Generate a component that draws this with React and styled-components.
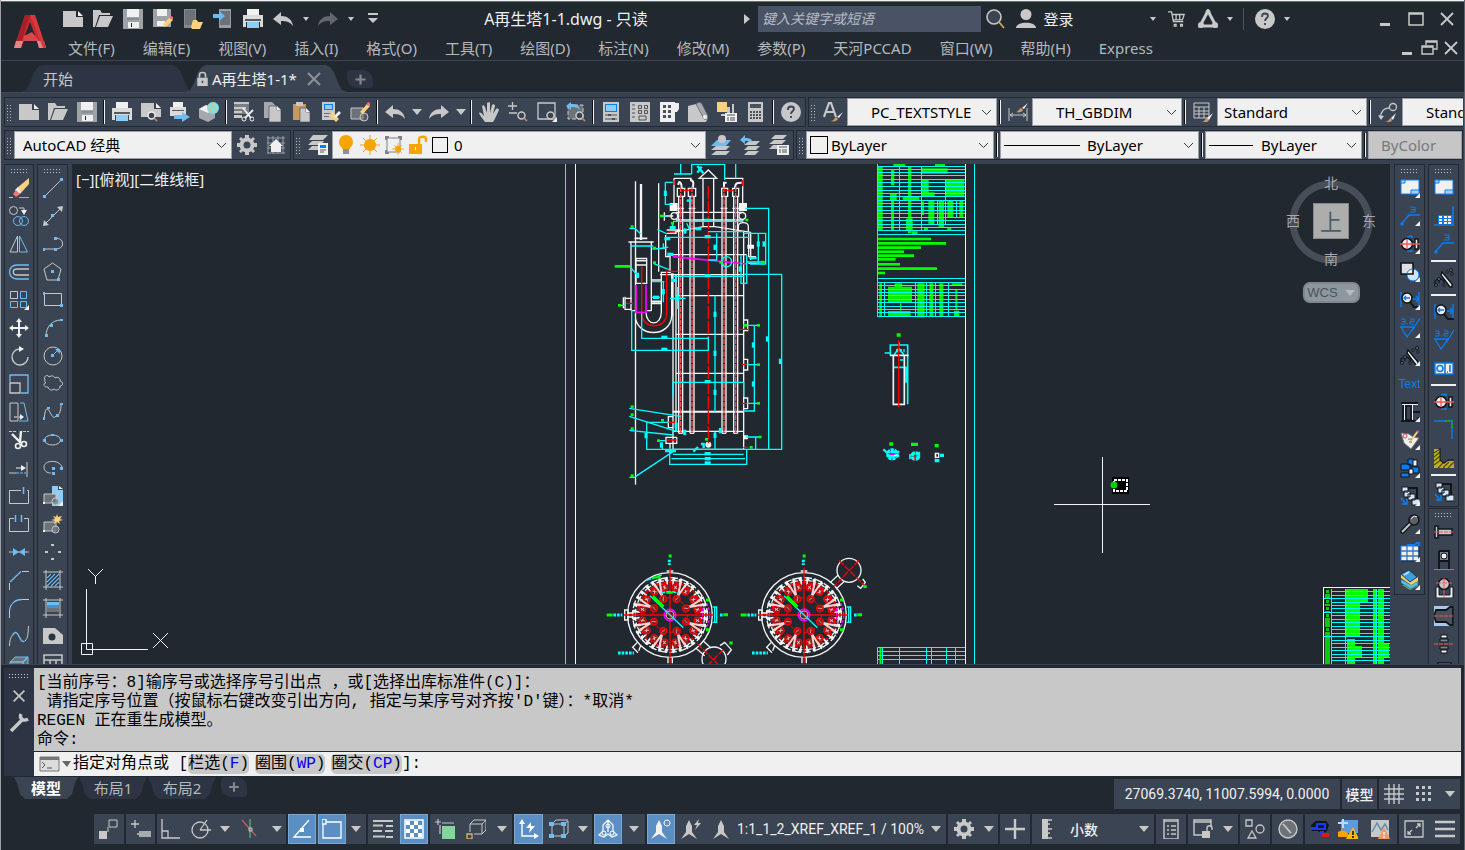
import { useState } from 'react';
import styled, { createGlobalStyle, css } from 'styled-components';

const GlobalStyle = createGlobalStyle`
  * {
    box-sizing: border-box;
  }

  body {
    margin: 0;
    overflow: hidden;
    background: #212830;
    font-family: 'Noto Sans', 'Noto Sans CJK SC', sans-serif;
    font-size: 15px;
  }

  button,
  input,
  select {
    font: inherit;
    color: inherit;
    margin: 0;
  }

  svg {
    display: block;
    flex: none;
  }
`;

const G = '#c8c8c8';
const W = '#f0f0f0';
const B = '#6ebcf5';
const L = '#8ecdf6';
const Y = '#fbd07f';
const O = '#f7a400';
const D = '#6d7278';
const P = '#0a7cf0';
const K = '#10151c';

const magnifier = (
  <>
    <circle cx="13.5" cy="13.5" r="3.5" fill="#3b4453" stroke={G} strokeWidth="1.5" />
    <path d="M16 16l3 3" stroke="#c98b6b" strokeWidth="1.6" />
  </>
);

const blockShape = (
  <>
    <path d="M1 8h12v9H1z" fill={D} stroke={G} />
    <path d="M0 16h2v2H0z" fill={W} />
    <circle cx="12.5" cy="15.5" r="3.5" fill={D} fillOpacity=".6" stroke={G} />
  </>
);

const leaderNumber = (
  <>
    <path d="M2 17L9 9h11" fill="none" stroke={P} strokeWidth="1.4" />
    <circle cx="2" cy="18" r="1.8" fill={P} />
    <path d="M10 1h5v5h-5M11 3.5h4" fill="none" stroke={P} />
  </>
);

const surface = (
  <>
    <path d="M0 9h14L7 19 1 9M12 13L20 0" fill="none" stroke={P} strokeWidth="1.3" />
    <path d="M1 1h4v5H1M2 3.5h3M7 6h1M10 1h4v2.5h-4v2.5h4" fill="none" stroke={P} />
  </>
);

const boltCircle = (
  <>
    <path d="M12 2v2M12 16v2M7 3l5-1M7 17h5" stroke={P} strokeWidth="1.6" />
    <circle cx="7" cy="10" r="5.5" fill={W} stroke={K} strokeWidth="1.6" />
    <path d="M15 5h3v10h-3z" fill={W} stroke={K} strokeWidth="1.4" />
    <path d="M0 10h20M7 5v10" stroke="#f25555" strokeWidth="1.3" />
  </>
);

const drill = (
  <>
    <path d="M8 4l10 12v3h-2L7 7z" fill={W} stroke={K} strokeWidth="1.4" />
    <path d="M1 17v-4l4-3 5 3v5M5 12v3" fill="none" stroke={K} strokeWidth="1.3" />
    <circle cx="17" cy="2" r="1.5" fill={D} stroke={K} />
    <circle cx="13" cy="4" r="1.3" fill={D} stroke={K} />
    <circle cx="18" cy="6" r="1.3" fill={D} stroke={K} />
    <circle cx="5" cy="11" r="1.5" fill={D} stroke={K} />
    <circle cx="2" cy="17" r="1.5" fill={D} stroke={K} />
    <circle cx="10" cy="17" r="1.3" fill={D} stroke={K} />
  </>
);

const dimZoom = (
  <>
    <path d="M1 2v15M19 2v15M3 9h16M16 6l3 3-3 3" fill="none" stroke={P} strokeWidth="1.4" />
    <circle cx="7" cy="8" r="5" fill={W} stroke={K} strokeWidth="1.6" />
    <path d="M4 8h6M6 6L4 8l2 2" fill="none" stroke={P} strokeWidth="1.4" />
    <path d="M10 12l4 5h6" fill="none" stroke={K} strokeWidth="2" />
  </>
);

const explode = (
  <>
    <path d="M6 1h12v15h-2V3H6z" fill={K} />
    <path d="M2 1h6v5H2zM4 5h6v6H4zM8 8h7v6H8zM12 13h8v6h-8z" fill="#d5e6f6" stroke={K} />
    <path d="M1 12l5 6M2 18h5v-5" fill="none" stroke={P} strokeWidth="1.6" />
  </>
);

const sheet = (
  <>
    <path d="M1 2h18v14H1z" fill={W} stroke={P} />
    <path d="M1 2h4v3H1zM11 12h8v4h-8z" fill="#a9d2fb" stroke={P} />
  </>
);

const hatchFrame = <path d="M3 0v20M17 0v20M0 2h20M0 17h20" stroke={G} fill="none" />;

const glyphs = {
  new: (
    <>
      <path d="M0 2h13v6h7v10H0z" fill={G} />
      <path d="M15 2l5 5h-5z" fill={W} />
    </>
  ),
  open: (
    <>
      <path d="M0 18V1h7l2 3h8v2H6L2 18z" fill={G} />
      <path d="M7 7h13l-5 11H3z" fill={G} />
    </>
  ),
  save: (
    <>
      <path d="M0 0h20v20H0z" fill="#9fa3a8" />
      <path d="M4 0h12v8H4zM5 13h11v6H5z" fill={W} />
      <path d="M8 14h1v4H8z" fill="#212830" />
      <path d="M4 9h12v2H4z" fill="#8a8e94" />
    </>
  ),
  saveas: (
    <>
      <path d="M0 0h18v18H0z" fill="#9fa3a8" />
      <path d="M4 0h10v7H4zM4 12h8v5H4z" fill={W} />
      <path d="M10 18l1-4 6-6 3 3-6 6z" fill={Y} />
      <path d="M16 9l2-2 2 1v3z" fill="#f26f6f" />
    </>
  ),
  mobile: (
    <>
      <path d="M1 0h12v19H1z" fill="#85898f" />
      <path d="M2 1h10v15H2z" fill={D} />
      <path d="M8 18l2-7h4l1 2h5l-3 7H9z" fill={Y} />
    </>
  ),
  upload: (
    <>
      <path d="M6 0h12v19H6z" fill="#9a9ea4" />
      <path d="M7 2h10v14H7z" fill={D} />
      <path d="M0 5h6V2l6 5-6 5V9H0z" fill={B} />
    </>
  ),
  print: (
    <>
      <path d="M4 0h12v6H4z" fill={W} />
      <path d="M0 6h20v12h-3v-5H3v5H0z" fill="#dcdcdc" />
      <path d="M2 10h16v2H2z" fill="#555b64" />
      <path d="M4 13h12v6H4z" fill={L} />
    </>
  ),
  undo: <path d="M0 10l8-7v4c6 0 11 3 12 10-3-4-6-5-12-5v4z" fill={G} />,
  redo: <path d="M20 10l-8-7v4C6 7 1 10 0 17c3-4 6-5 12-5v4z" fill={G} />,
  redoDim: <path d="M20 10l-8-7v4C6 7 1 10 0 17c3-4 6-5 12-5v4z" fill="#62676d" />,
  customize: <path d="M5 4h10v2H5zM5 9h10l-5 5z" fill={G} />,
  preview: (
    <>
      <path d="M0 1h13v6h7v8H0z" fill={G} />
      <path d="M15 1l5 5h-5z" fill={W} />
      <circle cx="10.5" cy="13.5" r="3.5" fill="#3b4453" stroke={W} strokeWidth="1.4" />
      <path d="M13 16l3 3" stroke="#c98b6b" strokeWidth="1.6" />
    </>
  ),
  publish: (
    <>
      <path d="M3 0h10v5H3z" fill={W} />
      <path d="M0 5h16v9H0z" fill="#dcdcdc" />
      <path d="M2 8h12v1H2z" fill="#555b64" />
      <path d="M4 13h8v-3l8 5-8 5v-3H4z" fill={B} />
    </>
  ),
  cube: (
    <>
      <path d="M0 7l7-4 9 4v9l-7 4-9-4z" fill="#a5a9ae" />
      <path d="M0 7l7-4 9 4-7 4z" fill={W} />
      <circle cx="14" cy="6" r="6" fill="#7fe0ea" />
      <path d="M9 3c3 0 7 2 9 7M12 11c-2-4 0-8 4-11" fill="none" stroke="#e3bf72" />
    </>
  ),
  cut: (
    <>
      <path d="M0 0h15v2H0zM0 5h12v2H0zM0 9h8v2H0zM0 13h8v3H0z" fill={G} />
      <path d="M15 0v12H0V0z" fill={G} fillOpacity=".45" />
      <path d="M9 6l8 10M19 8l-8 8" stroke={W} strokeWidth="1.8" />
      <circle cx="10" cy="17" r="2" fill="none" stroke={W} />
      <circle cx="18" cy="17" r="2" fill="none" stroke={W} />
    </>
  ),
  copy: (
    <>
      <path d="M1 0h8l4 4v12H1z" fill="#a5a9ae" />
      <path d="M6 4h8v4h4v12H6z" fill={G} stroke="#3b4453" strokeWidth=".6" />
      <path d="M14 4l4 4h-4z" fill={W} />
    </>
  ),
  paste: (
    <>
      <path d="M1 2h13v16H1z" fill="#c9975a" />
      <path d="M4 0h7v4H4z" fill={G} />
      <path d="M8 6h6v4h4v10H8z" fill={G} stroke="#3b4453" strokeWidth=".6" />
      <path d="M14 6l4 4h-4z" fill={W} />
    </>
  ),
  match: (
    <>
      <path d="M1 0h13v18H1z" fill={G} />
      <path d="M3 2h9v6H3z" fill={P} />
      <path d="M4 3h7v4H4z" fill={L} />
      <path d="M3 11h7v1H3zM3 14h5v1H3z" fill="#6a6e74" />
      <path d="M8 13l3-3 7 7-3 3z" fill={Y} />
      <path d="M13 14l5-5 2 2-5 5z" fill={W} />
    </>
  ),
  blockedit: (
    <>
      <path d="M1 6h12v11H1z" fill={D} stroke={G} />
      <circle cx="14" cy="15" r="4" fill={D} fillOpacity=".5" stroke={G} />
      <path d="M10 10l7-8 3 2-7 8z" fill={Y} />
      <path d="M16 3l2-3 2 1v3z" fill="#f26f6f" />
    </>
  ),
  hand: (
    <path
      d="M6 20c-2-3-5-6-6-9 1-1 3 0 4 2l1 1L3 4c1-1 2-1 3 1l2 6V1c1-1 3-1 3 0v10l2-8c1-1 3-1 3 1l-2 8 3-5c1-1 3 0 3 1-2 4-4 9-6 12z"
      fill={G}
    />
  ),
  zoomrt: (
    <>
      <path d="M0 4h9M4.5 0v8M1 11h8" stroke={G} strokeWidth="1.3" />
      {magnifier}
    </>
  ),
  zoomwin: (
    <>
      <path d="M1 1h17v16H1z" fill="none" stroke={G} strokeWidth="1.3" />
      {magnifier}
      <path d="M20 15v5h-5z" fill={W} />
    </>
  ),
  zoomprev: (
    <>
      <path d="M2 3h15v14H2z" fill={D} stroke={G} strokeDasharray="4 2" />
      {magnifier}
      <path d="M0 4l5-4v2c6 0 8 2 9 6-3-3-5-3-9-3v3z" fill={B} />
    </>
  ),
  props: (
    <>
      <path d="M2 0h16v20H2z" fill={G} />
      <path d="M4 2h12v8H4z" fill={P} />
      <path d="M5 3h10v6H5z" fill={L} />
      <path d="M4 13h12M4 17h12" stroke="#4c525b" />
      <path d="M7 12h3v2H7zM11 16h3v2h-3z" fill="#4c525b" />
    </>
  ),
  designcenter: (
    <>
      <path d="M0 0h20v20H0z" fill={G} />
      <path d="M2 3h3M2 7h3M2 11h3M2 15h3M9 14h7v4H9zM8.5 3.5h3v3h-3zM14.5 3.5h3v3h-3zM8.5 8.5h3v3h-3zM14.5 8.5h3v3h-3z" fill="none" stroke="#4c525b" />
    </>
  ),
  palettes: (
    <>
      <path d="M1 0h15v20H1zM16 1h4v6l-2 3h-2z" fill={W} />
      <path d="M4 3h3v3H4zM9 3h3v3H9zM4 8h3v3H4zM9 8h3v3H9zM4 13h3v3H4zM9 13h3v3H9z" fill="#4c525b" />
    </>
  ),
  sheetset: (
    <>
      <path d="M0 4l8-2 12 14-2 4H0z" fill={G} />
      <path d="M8 2c2-2 5-2 6 0l6 12c0 3-2 4-4 3z" fill="#a5a9ae" stroke="#555b64" strokeWidth=".7" />
      <circle cx="17" cy="15" r="2" fill={W} />
    </>
  ),
  markup: (
    <>
      <path d="M0 0h10v10H0z" fill={Y} />
      <path d="M4 12h6V5h3v6h2V2h2v12H4z" fill={G} />
      <path d="M8 11h12v9H8z" fill={W} />
      <path d="M10 13h8M10 16h2M10 18h2M13 16h5M13 18h5" stroke="#4c525b" />
    </>
  ),
  calc: (
    <>
      <path d="M2 0h15v20H2z" fill={G} />
      <path d="M4 2h11v4H4zM4 9h2v2H4zM7 9h2v2H7zM10 9h2v2h-2zM13 9h2v2h-2zM4 12h2v2H4zM7 12h2v2H7zM10 12h2v2h-2zM13 12h2v2h-2zM4 15h2v2H4zM7 15h2v2H7zM10 15h2v2h-2zM13 15h2v2h-2z" fill="#4c525b" />
    </>
  ),
  help: (
    <>
      <circle cx="10" cy="10" r="10" fill={G} />
      <path d="M7 8c0-5 6-4 6-1 0 2-3 2-3 5M10 14v2" fill="none" stroke="#3b4453" strokeWidth="1.8" />
    </>
  ),
  textstyle: (
    <>
      <path d="M1 15L6 1h2l5 14M3 10h8" fill="none" stroke={G} strokeWidth="2.2" />
      <path d="M8 19c3 0 3-3 5-4l2 2c-1 2-4 3-7 2z" fill="#cf9a62" />
      <path d="M14 15l6-5-4 6z" fill={W} />
    </>
  ),
  dimstyle: (
    <>
      <path d="M1 6v13M19 6v13M2 13h16M5 11l-3 2 3 2M15 11l3 2-3 2" fill="none" stroke={G} />
      <path d="M8 10c2 0 3-3 5-4l2 2c-1 2-4 3-7 2z" fill="#cf9a62" />
      <path d="M14 6l6-5-4 6z" fill={W} />
    </>
  ),
  tablestyle: (
    <>
      <path d="M1 1h15v15H1zM1 5h15M1 9h15M1 12h15M6 5v11M11 5v11" fill="none" stroke={G} />
      <path d="M9 20c2 0 3-3 5-4l2 2c-1 2-4 3-7 2z" fill="#cf9a62" />
      <path d="M14 16l6-5-4 7z" fill={W} />
    </>
  ),
  mleader: (
    <>
      <path d="M2 16C3 9 6 6 11 6" fill="none" stroke={G} strokeWidth="1.3" />
      <circle cx="15" cy="5" r="3.5" fill="none" stroke={G} strokeWidth="1.3" />
      <path d="M0 13l6 1-3 4z" fill={G} />
      <path d="M7 20c3 0 4-3 6-4l1 2c-1 2-4 3-7 2z" fill="#cf9a62" />
      <path d="M13 16l5-5-3 7z" fill={W} />
    </>
  ),
  gear: (
    <>
      <circle cx="10" cy="10" r="5.5" fill="none" stroke={G} strokeWidth="4" />
      <path d="M8 0h4v4H8zM8 16h4v4H8zM0 8h4v4H0zM16 8h4v4h-4zM2 4l2-2 3 3-2 2zM13 15l2-2 3 3-2 2zM16 2l2 2-3 3-2-2zM5 13l2 2-3 3-2-2z" fill={G} />
    </>
  ),
  home: (
    <>
      <path d="M1 3h18M1 8h18M1 13h18M1 18h18M2 1v18M7 1v18M12 1v18M17 1v18" stroke="#9a9ea4" />
      <path d="M10 4l7 7h-2v6H5v-6H3z" fill={W} />
    </>
  ),
  layers: (
    <>
      <path d="M5 0h15l-5 5H1zM4 6h12l-3 4H0zM4 11h6v4H0z" fill={G} />
      <path d="M10 8h10v12H10z" fill={W} />
      <path d="M12 10h6v3h-6z" fill={P} />
      <path d="M12 15h6M12 17h4" stroke="#555b64" />
    </>
  ),
  layermake: (
    <>
      <path d="M5 16h14l-4 4H0zM5 11h14l-4 4H0z" fill={G} />
      <path d="M6 5h14l-5 6H0z" fill={B} />
      <circle cx="11" cy="4" r="4" fill={G} />
    </>
  ),
  layerprev: (
    <>
      <path d="M8 16h11l-4 4H4zM8 11h12l-4 4H4zM9 6h11l-4 4H4z" fill={G} />
      <path d="M0 5l5-5v3c5 0 7 1 8 5-3-2-5-2-8-2v3z" fill={B} />
    </>
  ),
  layerstate: (
    <>
      <path d="M6 0h12l-4 4H2zM5 5h12l-4 4H0zM4 10h5v4H0z" fill={G} />
      <path d="M8 10h12v10H8z" fill={W} />
      <path d="M10 12h8M10 15h2M10 17h2M13 15h5M13 17h5" stroke="#4c525b" />
    </>
  ),
  bulb: (
    <>
      <circle cx="10" cy="7" r="7" fill={O} />
      <path d="M6 11h8v3H6z" fill={O} />
      <path d="M7 14h6v5H7z" fill="#8a9097" />
    </>
  ),
  sun: (
    <>
      <circle cx="10" cy="10" r="6" fill={O} />
      <path d="M10 0v20M0 10h20M3 3l14 14M17 3L3 17" stroke={O} />
    </>
  ),
  vpfreeze: (
    <>
      <path d="M3 3h13v14H3z" fill="none" stroke="#7d8288" />
      <path d="M1 1h4v2H3v2H1zM14 1h4v4h-2V3h-2zM1 15h2v2h2v2H1z" fill="#7d8288" />
      <circle cx="14" cy="14" r="3" fill={O} />
      <path d="M14 8v12M8 14h12M10 10l8 8M18 10l-8 8" stroke={O} strokeWidth=".8" />
    </>
  ),
  unlock: (
    <>
      <path d="M1 9h13v10H1z" fill={O} />
      <path d="M11 9V4c0-3 7-3 7 0v3" fill="none" stroke={O} strokeWidth="2.4" />
      <path d="M7 12h1v3H7z" fill="#fff" />
    </>
  ),
  erase: (
    <>
      <path d="M0 19.5h4" stroke={G} />
      <path d="M10 19.5h10" stroke={B} />
      <path d="M8 10L20 0v6L11 16z" fill={Y} />
      <path d="M6 12l3-3 3 5-3 3z" fill={W} />
      <path d="M4 16l3-4 4 4-4 3z" fill="#f0787c" />
    </>
  ),
  copyobj: (
    <>
      <circle cx="4.5" cy="4.5" r="4" fill="none" stroke={G} />
      <path d="M10 2h5v3" fill="none" stroke={G} />
      <path d="M12 4h6l-3 5z" fill={W} />
      <circle cx="9" cy="15" r="4.5" fill="none" stroke={B} />
      <circle cx="15" cy="15" r="4.5" fill="none" stroke={B} />
    </>
  ),
  mirror: (
    <>
      <path d="M8.5 2v16H1z" fill="none" stroke={G} />
      <path d="M10.5 2v16h8z" fill="none" stroke={B} />
    </>
  ),
  offset: (
    <>
      <path d="M20 3H8C-2 3-2 17 8 17h12" fill="none" stroke={B} strokeWidth="1.3" />
      <path d="M20 7H8c-5 0-5 6 0 6h12" fill="none" stroke={G} strokeWidth="1.3" />
    </>
  ),
  array: (
    <>
      <path d="M1.5 1.5h7v7h-7z" fill="none" stroke={G} />
      <path d="M11.5 1.5h6v7h-6zM1.5 11.5h7v6h-7zM11.5 11.5h6v6h-6z" fill="none" stroke={B} />
      <path d="M20 15v5h-5z" fill={W} />
    </>
  ),
  move: <path d="M10 0l3 4h-2v5h5V7l4 3-4 3v-2h-5v5h2l-3 4-3-4h2v-5H4v2l-4-3 4-3v2h5V4H7z" fill={W} />,
  rotate: (
    <>
      <path d="M10 3a8 8 0 1 0 9 8" fill="none" stroke={G} strokeWidth="1.4" />
      <path d="M10 0l5 3-5 3z" fill={W} />
    </>
  ),
  scale: (
    <>
      <path d="M1 8V1h18v18h-7" fill="none" stroke={B} strokeWidth="1.3" />
      <path d="M1 9h10v10H1z" fill="none" stroke={G} strokeWidth="1.3" />
    </>
  ),
  stretch: (
    <>
      <path d="M9 14V1H1v18h8v-3" fill="none" stroke={G} />
      <path d="M11 1h4l4 18h-9" fill="none" stroke={B} />
      <path d="M5 15h7" stroke={W} />
      <path d="M11 12l4 3-4 3z" fill={W} />
    </>
  ),
  trim: (
    <>
      <path d="M0 1.5h8M14 1.5h6" stroke={G} strokeDasharray="3 1" />
      <path d="M3 4l9 9M12 1l-1 11" stroke={W} strokeWidth="2.4" />
      <circle cx="9" cy="16" r="2.5" fill="none" stroke={W} strokeWidth="1.6" />
      <circle cx="15" cy="14" r="2.5" fill="none" stroke={W} strokeWidth="1.6" />
    </>
  ),
  extend: (
    <>
      <path d="M0 15h7M18 4v15" stroke={G} />
      <path d="M7 15h10" stroke={B} strokeDasharray="3 1" />
      <path d="M7 10h6" stroke={W} />
      <path d="M12 7l5 3-5 3z" fill={W} />
    </>
  ),
  breakpt: (
    <>
      <path d="M12 4.5H.5v13h19v-13H18" fill="none" stroke={G} />
      <path d="M14.5 1v7" stroke={B} strokeWidth="1.5" />
    </>
  ),
  break: (
    <>
      <path d="M5 4.5H.5v13h19v-13H15" fill="none" stroke={G} />
      <path d="M6.5 1v7M12.5 1v7" stroke={B} strokeWidth="1.5" />
    </>
  ),
  join: (
    <>
      <path d="M0 10h20" stroke={G} />
      <path d="M4 6l6 4-6 4zM16 6l-6 4 6 4z" fill={B} />
    </>
  ),
  chamfer: (
    <>
      <path d="M.5 20v-7M13 1.5h7" stroke={G} />
      <path d="M1 12L12 1.500" stroke={B} strokeWidth="1.3" />
    </>
  ),
  fillet: (
    <>
      <path d="M.5 20v-7M13 1.5h7" stroke={G} />
      <path d="M.5 13C1 6 6 1.5 13 1.5" fill="none" stroke={B} strokeWidth="1.3" />
    </>
  ),
  blend: (
    <>
      <path d="M.5 20c0-5 1-8 3-11M16 15c3-3 3-7 3.5-15" fill="none" stroke={G} />
      <path d="M3.5 9c6-9 7 10 12 6" fill="none" stroke={B} strokeWidth="1.4" />
    </>
  ),
  explodeobj: (
    <>
      <path d="M1 8l5-5h13v10l-5 5H1z" fill={D} stroke={B} />
      <path d="M1 8h13v10M14 8l5-5" fill="none" stroke={B} strokeWidth="1.5" />
    </>
  ),
  line: (
    <>
      <path d="M2 18L18 2" stroke={G} />
      <path d="M0 17h3v3H0zM17 0h3v3h-3z" fill={B} />
    </>
  ),
  xline: (
    <>
      <path d="M2 18L18 2" stroke={G} />
      <path d="M0 20l1-6 5 5zM20 0l-1 6-5-5z" fill={G} />
      <path d="M8 8h3v3H8z" fill={B} />
    </>
  ),
  pline: (
    <>
      <path d="M1 15h12M12 4c10 0 10 11 1 11" fill="none" stroke={G} />
      <path d="M0 14h2v3H0zM11 14h3v3h-3zM11 3h3v3h-3z" fill={B} />
    </>
  ),
  polygon: (
    <>
      <path d="M9.5 1L18 7l-3 11H4L1 7z" fill="none" stroke={G} />
      <path d="M8 8h3v3H8zM14 16h3v3h-3z" fill={B} />
    </>
  ),
  rect: (
    <>
      <path d="M1.5 3.5h17v12h-17z" fill="none" stroke={G} />
      <path d="M0 2h2v3H0zM17 14h3v3h-3z" fill={B} />
    </>
  ),
  arc: (
    <>
      <path d="M3 18C3 9 9 2 18 2" fill="none" stroke={G} />
      <path d="M2 16h3v3H2zM7 6h3v3H7zM17 1h3v2h-3z" fill={B} />
    </>
  ),
  circle: (
    <>
      <circle cx="10" cy="10" r="9" fill="none" stroke={G} />
      <path d="M8 8h3v3H8zM12 3h5v5z" fill={B} />
      <path d="M10 9l4-4" stroke={B} />
    </>
  ),
  cloud: (
    <path d="M2 6c-2-4 3-6 4-3 3-2 5-1 6 1 3-2 6 1 5 3 4 1 3 5 0 5 0 4-4 5-6 3-3 2-5 1-6-2-5 1-5-5-2-4-1-1-2-2-1-3z" fill="none" stroke={G} />
  ),
  spline: (
    <>
      <path d="M1 17c3-25 7 5 12-3 4-1 5-6 5-12" fill="none" stroke={G} />
      <path d="M0 15h2v3H0zM4 5h3v2H4zM13 12h3v3h-3zM17 1h3v2h-3z" fill={B} />
    </>
  ),
  ellipse: (
    <>
      <ellipse cx="9.5" cy="10" rx="8" ry="5" fill="none" stroke={G} />
      <path d="M0 9h3v3H0zM17 9h3v3h-3zM8 4h3v2H8z" fill={B} />
    </>
  ),
  ellipsearc: (
    <>
      <path d="M19 9C16 1 1 2 1 9c0 4 3 6 7 6" fill="none" stroke={G} />
      <path d="M9 9h3v3H9zM9 14h3v3H9zM17 9h3v3h-3z" fill={B} />
    </>
  ),
  insert: (
    <>
      <path d="M9 0h6v4h5v16H9z" fill={L} />
      <path d="M16 0l4 3h-4z" fill={W} />
      {blockShape}
      <path d="M20 15v5h-5z" fill={W} />
    </>
  ),
  makeblock: (
    <>
      {blockShape}
      <path d="M14 0l1 3 4-1-2 3 3 1-4 1 1 3-3-2-3 2 1-3-4-1 4-1-2-3 3 1z" fill={Y} />
    </>
  ),
  point: <path d="M8 2h3v2H8zM8 16h3v2H8zM2 9h3v2H2zM15 9h3v2h-3z" fill={G} />,
  hatch: (
    <>
      {hatchFrame}
      <path d="M4 4h12v12H4z" fill="#2b3340" />
      <path d="M4 8l4-4M4 12l8-8M4 16L16 4M8 16l8-8M12 16l4-4" stroke={B} strokeWidth="1.2" />
    </>
  ),
  gradient: (
    <>
      {hatchFrame}
      <path d="M4 4h12v3H4z" fill={B} />
      <path d="M4 7h12v3H4z" fill="#4a90cc" />
      <path d="M4 10h12v4H4z" fill="#6d7278" />
    </>
  ),
  region: (
    <>
      <path d="M0 2h12l8 7v9H0z" fill={G} />
      <circle cx="9" cy="11" r="3.5" fill="#2b3340" />
    </>
  ),
  table: <path d="M1 1h18v18H1zM1 6h18M1 11h18M7 6v13M13 6v13" fill="none" stroke={G} strokeWidth="1.5" />,
  sheet,
  sheettable: (
    <>
      <path d="M19 0v19M0 19h20" stroke={P} strokeWidth="1.6" />
      <path d="M4 9h14v9H4z" fill={P} />
      <path d="M5 10h3v2H5zM10 10h3v2h-3zM14 10h3v2h-3zM5 13h3v2H5zM10 13h3v2h-3zM14 13h3v2h-3zM5 16h3v2H5zM10 16h3v2h-3zM14 16h3v2h-3z" fill={W} />
    </>
  ),
  leaderNumber,
  boltCircle,
  drill,
  dimZoom,
  surface,
  explode,
  shapes: (
    <>
      <circle cx="13" cy="13" r="6" fill="#cfe3f5" stroke={P} />
      <path d="M1 1h12v11H1z" fill={W} fillOpacity=".9" stroke={K} strokeWidth="1.6" />
      <path d="M7 12c0-3 3-5 6-5" fill="none" stroke={P} />
    </>
  ),
  beam: (
    <>
      <path d="M1 1h17M3 1v17M1 19h17M18 15v4M13 10h7" fill="none" stroke={K} strokeWidth="1.8" />
      <path d="M6 4h5v14H6z" fill="#3b4453" stroke={K} strokeWidth="1.6" />
      <path d="M4.5 3v15M12.5 3v15M2 2.5h16" stroke={W} />
    </>
  ),
  tolerance: (
    <>
      <path d="M1 5h18v11H1z" fill={W} stroke={P} strokeWidth="1.4" />
      <circle cx="6" cy="10.5" r="3" fill="none" stroke={P} strokeWidth="1.6" />
      <path d="M11 5v11M13 14h1M16 7v7" stroke={P} strokeWidth="1.6" />
    </>
  ),
  corner: (
    <>
      <path d="M0 1h18v18" fill="none" stroke={P} strokeWidth="1.4" />
      <path d="M11 1h7v7" fill="none" stroke="#12a12c" strokeWidth="2" strokeDasharray="2 1" />
    </>
  ),
  weld: (
    <>
      <path d="M0 1h6v12l4 3 4-3h6v7H0z" fill="#c0b11c" />
      <path d="M0 5l6-4M0 9l6-5M0 13l6-5M0 17l8-6M4 20l5-5M9 20l6-6M14 20l6-6" stroke="#4d4816" strokeWidth="1.3" />
      <path d="M6 0v12l4 3 4-3h6" fill="none" stroke={K} />
    </>
  ),
  note: (
    <>
      <path d="M1 3l8 1 4 3 6 1-8 11-7-6z" fill={W} stroke="#777" />
      <path d="M10 12L18 1" stroke={Y} strokeWidth="2" />
      <circle cx="5" cy="6" r="2" fill="none" stroke="#d4474b" />
      <path d="M8 9h4M9 12h3" stroke="#777" />
      <path d="M17 1l2 1" stroke="#c3f" strokeWidth="2" />
    </>
  ),
  parts: (
    <>
      <path d="M8 1h6v6H8zM1 6h9v6H1zM11 9h8v6h-8zM1 15h8v4H1z" fill={P} stroke={K} />
      <path d="M13 2h4v6h-4zM9 11h4v5H9z" fill={W} stroke={K} />
    </>
  ),
  wrenchPart: (
    <>
      <path d="M1 19L12 8" stroke={K} strokeWidth="4.5" />
      <path d="M2 18L12 8" stroke={G} strokeWidth="2" />
      <circle cx="14" cy="6" r="5" fill="#5d6269" stroke={K} strokeWidth="1.5" />
      <path d="M11 5l3-3 3 1" fill="none" stroke={W} />
    </>
  ),
  bom: (
    <>
      <path d="M1 4h18v15H1z" fill={W} stroke={P} />
      <path d="M1 9h18M1 14h18M7 4v15M13 4v15" stroke="#3c78b8" strokeWidth="1.3" />
      <path d="M1 19h18V4" fill="none" stroke={K} />
      <path d="M7 3h7l3-2h2v3" fill="none" stroke={P} strokeWidth="2" />
    </>
  ),
  books: (
    <>
      <path d="M2 15l8 5 8-4v-5l-8 3z" fill="#74c043" />
      <path d="M1 9v4l10 6 7-4v-4l-7 4z" fill="#5bbbe8" stroke="#22507a" strokeWidth=".6" />
      <path d="M1 4v4l10 7 7-4V7l-8 5z" fill="#e8d36a" />
      <path d="M1 4l8-4 8 7-7 5z" fill="#3b9fe0" stroke={K} strokeWidth=".6" />
      <path d="M4 5l5-3" stroke="#bfe6f7" strokeWidth="1.5" />
    </>
  ),
  screw: (
    <>
      <path d="M1 4h3v12H1zM4 7h14v6H4z" fill={G} stroke={K} strokeWidth="1.5" />
      <path d="M0 10h20" stroke="#f25555" strokeDasharray="4 1" />
    </>
  ),
  nut: (
    <>
      <path d="M5 1h10v18M5 1v18M5 11h10" fill="none" stroke={K} strokeWidth="1.8" />
      <path d="M6 2h8v8H6z" fill="#7d8288" />
      <circle cx="10" cy="6" r="3" fill={W} stroke={K} />
      <path d="M0 19.5h20" stroke="#f25555" />
    </>
  ),
  bearing: (
    <>
      <path d="M2 9h3v8h11V9h3v11H2z" fill={W} stroke={K} />
      <circle cx="10" cy="6" r="5.5" fill={G} stroke={K} strokeWidth="1.5" />
      <path d="M2 5h16M10 0v20" stroke="#f25555" strokeDasharray="5 1" />
    </>
  ),
  cone: (
    <>
      <path d="M0 0h20v20H0z" fill="#a9c8ec" />
      <path d="M19 1v18h-3l-4-3H2l-2-6 2-6h10l4-3z" fill="#4a515c" stroke={K} strokeWidth="1.8" />
      <path d="M0 10h20" stroke="#f25555" strokeDasharray="4 1" />
    </>
  ),
  seal: (
    <>
      <path d="M7 1h6v3H7zM7 16h6v3H7z" fill={W} stroke={K} />
      <path d="M6 5h8v3H6zM6 12h8v3H6z" fill="#7d8288" stroke={K} />
      <path d="M0 10h20" stroke="#f25555" strokeDasharray="4 1" />
    </>
  ),
  plate: <path d="M4 1h13v5H4z" fill={W} stroke={K} strokeWidth="1.5" />,
  search: (
    <>
      <circle cx="8" cy="8" r="7" fill="#3b4453" stroke={G} strokeWidth="1.6" />
      <path d="M13 13l5 6" stroke="#d2a15f" strokeWidth="1.8" />
    </>
  ),
  user: (
    <>
      <circle cx="10" cy="5.5" r="5.5" fill={G} />
      <path d="M0 19c0-7 20-7 20 0z" fill={G} />
    </>
  ),
  cart: (
    <path d="M0 2h4l2 11h11M5 5h13l-2 6H6M7 16h2v2H7zM14 16h2v2h-2zM9 5v6M13 5v6" fill="none" stroke={G} strokeWidth="1.4" />
  ),
  a360: (
    <>
      <path d="M10 2L2 17h16z" fill="none" stroke={G} strokeWidth="3" />
      <circle cx="10" cy="3" r="2.5" fill={G} />
      <circle cx="3" cy="16" r="3" fill={G} />
      <circle cx="17" cy="16" r="3" fill={G} />
    </>
  ),
  min: <path d="M5 14h10v3H5z" fill={G} />,
  max: <path d="M3 4h14v12H3zM3 5h14" fill="none" stroke={G} strokeWidth="1.5" />,
  close: <path d="M4 4l12 12M16 4L4 16" stroke={G} strokeWidth="1.8" />,
  closeTab: <path d="M4 4l12 12M16 4L4 16" stroke="#8a8f96" strokeWidth="2.2" />,
  restore: <path d="M7 7V3h11v8h-4M3 8h11v8H3zM3 9h11M7 4h11" fill="none" stroke={G} strokeWidth="1.4" />,
  lock: (
    <>
      <path d="M3 9h14v11H3z" fill={G} />
      <path d="M6 9V5c0-4 8-4 8 0v4" fill="none" stroke={G} strokeWidth="2.2" />
      <path d="M9 13h2v3H9z" fill="#3b4453" />
    </>
  ),
  plus: <path d="M10 4v12M4 10h12" stroke="#83888f" strokeWidth="2.6" />,
  wrench: <path d="M2 18L13 7M12 1c-2 4 2 8 7 5" fill="none" stroke={G} strokeWidth="3.4" />,
  infer: (
    <>
      <path d="M0 12h8v8H0z" fill={G} />
      <path d="M10 1h8v7h-8zM9 8v5" fill="none" stroke={G} />
    </>
  ),
  snap: (
    <>
      <path d="M4 1v8M0 5h8M6 15h3" stroke={G} strokeWidth="1.3" />
      <path d="M8 12h12v6H8z" fill="#a7abb0" />
    </>
  ),
  ortho: <path d="M1 0v19h18M1 12h6v7" fill="none" stroke={G} strokeWidth="1.3" />,
  polar: (
    <>
      <circle cx="9" cy="11" r="8" fill="none" stroke={G} strokeWidth="1.3" />
      <path d="M9 11L16 1M9 11h11" stroke={G} strokeWidth="1.3" />
    </>
  ),
  iso: (
    <>
      <path d="M2 1l14 16" stroke="#c05c5c" strokeWidth="1.3" />
      <path d="M10 0v19" stroke="#58b06e" strokeWidth="1.3" />
      <path d="M9 9h3v3H9z" fill="none" stroke={G} />
    </>
  ),
  track: (
    <>
      <path d="M17 1L2 18h17" fill="none" stroke="#fff" strokeWidth="1.3" />
      <path d="M8 9h4v4H8z" fill="#fff" />
    </>
  ),
  osnap: <path d="M4 3h15v16H1V5M0 0h4v5H0z" fill="none" stroke="#fff" strokeWidth="1.3" />,
  lweight: <path d="M0 2h20M0 6.5h10M0 12h9M0 17.5h12M13 7h7M12 12h8M13 18h7" stroke={G} strokeWidth="2.2" />,
  transp: (
    <>
      <path d="M1 1h18v18H1z" fill="none" stroke="#fff" strokeWidth="1.5" />
      <path d="M2 2h4v4H2zM10 2h4v4h-4zM6 6h4v4H6zM14 6h4v4h-4zM2 10h4v4H2zM10 10h4v4h-4zM6 14h4v4H6zM14 14h4v4h-4z" fill="#fff" />
    </>
  ),
  cycle: (
    <>
      <path d="M3 0v6M0 3h6M7 4h12M5 6v9" stroke={G} strokeWidth="1.2" />
      <path d="M7 7h13v13H7z" fill="#82d89a" />
    </>
  ),
  cube3d: (
    <>
      <path d="M4 5l4-4h12l-4 4zM16 5v10l4-4V1M4 5v8M8 15h8" fill="none" stroke={G} />
      <path d="M1 15h5v5H1z" fill="none" stroke="#e0ae6c" strokeWidth="1.3" />
    </>
  ),
  ducs: (
    <>
      <path d="M3 3v14h14" fill="none" stroke="#fff" strokeWidth="1.4" />
      <path d="M0 5l3-5 3 5zM15 14l5 3-5 3zM12 3L7 9h4l-1 5 6-7h-4z" fill="#fff" />
    </>
  ),
  filter: (
    <>
      <path d="M3 5h12v12H3zM15 5l4-3v12l-4 3M3 5l4-4h12" fill="none" stroke={G} />
      <path d="M0 3h5v4H0zM12 3h5v4h-5zM0 15h5v4H0zM12 15h5v4h-5z" fill={B} />
    </>
  ),
  gizmo: (
    <>
      <path d="M10 1l5 5v6l4 4-5 2-4-3-4 3-5-2 4-4V6zM10 1v12" fill="none" stroke="#fff" strokeWidth="1.2" />
      <circle cx="10" cy="7" r="2" fill="none" stroke="#fff" />
      <circle cx="6" cy="14" r="2" fill="none" stroke="#fff" />
      <circle cx="14" cy="14" r="2" fill="none" stroke="#fff" />
    </>
  ),
  annovis: (
    <>
      <path d="M8 1l3 6v6l5 7-8-5-8 5 5-7V7z" fill={W} />
      <circle cx="16" cy="4" r="3" fill="none" stroke="#fff" />
    </>
  ),
  annoauto: (
    <>
      <path d="M8 1l3 6v6l5 7-8-5-8 5 5-7V7z" fill={G} />
      <path d="M18 0l-5 6h3l-2 5 6-7h-3z" fill={G} />
    </>
  ),
  anno: <path d="M10 1l3 6v6l5 7-8-5-8 5 5-7V7z" fill={G} />,
  crossplus: <path d="M10 0v20M0 10h20" stroke={G} strokeWidth="2.4" />,
  ruler: (
    <>
      <path d="M5 0h6v20H5z" fill={G} />
      <path d="M11 1h4M11 5h2M11 10h4M11 14h2M11 19h4" stroke={G} strokeWidth="1.6" />
    </>
  ),
  quickprops: (
    <>
      <path d="M3 0h14v20H3z" fill="none" stroke={G} strokeWidth="1.4" />
      <path d="M3 2h14M6 7h2M10 7h5M6 11h2M10 11h5M6 15h2M10 15h5" stroke={G} strokeWidth="1.5" />
    </>
  ),
  lockui: (
    <>
      <path d="M9 16H1V1h17v7M1 3h17" fill="none" stroke={G} strokeWidth="1.4" />
      <path d="M9 12h8v7H9z" fill={G} />
      <path d="M14 12V9c0-3 5-3 5 0v2" fill="none" stroke={G} strokeWidth="1.4" />
    </>
  ),
  isolate: (
    <>
      <path d="M1 1h6v6H1zM7 12l4 7H3z" fill="none" stroke={G} strokeWidth="1.3" />
      <circle cx="15" cy="10" r="4" fill="none" stroke={G} strokeWidth="1.3" />
    </>
  ),
  hardware: (
    <>
      <circle cx="10" cy="10" r="9" fill={D} stroke={G} strokeWidth="1.4" />
      <path d="M5 5l8 9" stroke={G} strokeWidth="1.8" />
    </>
  ),
  pccad: (
    <>
      <path d="M2 6l5-4h10l3 4-2 6-5 3-4-3H3z" fill={K} />
      <path d="M8 5h8v5H8z" fill="none" stroke="#1c39ff" strokeWidth="2.2" />
      <path d="M2 8h5v3H2zM11 12h4v5h-4z" fill="#1c39ff" />
      <path d="M13 14h7v4h-7z" fill="#d91a1a" />
    </>
  ),
  sync: (
    <>
      <path d="M3 1h17v13H3z" fill="#5b9bdc" />
      <path d="M0 4h10M5 0v9" stroke="#b8dcff" strokeWidth="2" />
      <path d="M0 13c4-3 9-2 12 5H0z" fill={O} />
      <path d="M15 8l6 12H8z" fill="#fbb917" />
      <path d="M15 12v4M15 17v2" stroke={K} strokeWidth="1.6" />
    </>
  ),
  chartwarn: (
    <>
      <path d="M1 1h18v17H1z" fill={G} />
      <path d="M2 13l5-9 4 7 4-6 3 6" fill="none" stroke="#5d8db8" strokeWidth="1.5" />
      <path d="M14 8l6 12H8z" fill="#f39a63" />
      <path d="M14 13v3M14 17v2" stroke="#fff" strokeWidth="1.3" />
    </>
  ),
  clean: (
    <>
      <path d="M1 2h18v16H1z" fill="none" stroke={G} strokeWidth="1.3" />
      <path d="M12 9l4-4M13 5h3v3M8 11l-4 4M4 12v3h3" fill="none" stroke={G} strokeWidth="1.3" />
    </>
  ),
  menu: <path d="M0 3h20M0 10h20M0 17h20" stroke={G} strokeWidth="2.4" />,
  grid: <path d="M5 0v20M10 0v20M15 0v20M0 5h20M0 10h20M0 15h20" fill="none" stroke={G} strokeWidth="1.4" />,
  dots: <path d="M2 2h3v3H2zM8 2h3v3H8zM14 2h3v3h-3zM2 8h3v3H2zM8 8h3v3H8zM14 8h3v3h-3zM2 14h3v3H2zM8 14h3v3H8zM14 14h3v3h-3z" fill={G} />,
};

const flyoutMark = <path d="M20 15v5h-5z" fill={W} />;

const Icon = ({ name, size = 20, flyout }) => (
  <svg width={size} height={size} viewBox="0 0 20 20" aria-hidden="true">
    {glyphs[name]}
    {flyout && flyoutMark}
  </svg>
);

const Caret = ({ color = G }) => (
  <svg width="10" height="6" viewBox="0 0 10 6" aria-hidden="true">
    <path d="M0 0h10L5 6z" fill={color} />
  </svg>
);

const SmallCaret = () => (
  <svg width="6" height="4" viewBox="0 0 6 4" aria-hidden="true">
    <path d="M0 0h6L3 4z" fill={G} />
  </svg>
);

const Page = styled.div`
  display: flex;
  flex-direction: column;
  height: 100vh;
  background: #212830;
  color: ${G};
  border-left: 1px solid #9ba0a5;
  border-right: 1px solid #5d636b;
`;

const TopEdge = styled.div`
  height: 2px;
  flex: none;
  background: #1789bb;
  border-top: 1px solid #f4f4f4;
`;

const PlainButton = styled.button`
  display: flex;
  align-items: center;
  justify-content: center;
  flex: none;
  padding: 0;
  border: 0;
  background: none;
  cursor: pointer;
`;

const Header = styled.header`
  display: grid;
  grid-template-columns: 57px minmax(0, 1fr);
  grid-template-rows: 33px 25px;
  flex: none;
  border-bottom: 1px solid #3b4453;
`;

const LogoButton = styled(PlainButton)`
  grid-row: 1 / 3;
`;

const TitleBar = styled.div`
  display: flex;
  align-items: center;
`;

const ToolButton = styled(PlainButton)`
  width: ${({ $w }) => $w || 29}px;
  height: 28px;
`;

const Title = styled.h1`
  flex: 1;
  margin: 0;
  text-align: center;
  font-size: 16px;
  line-height: 20px;
  font-weight: 400;
  color: ${W};
`;

const SearchField = styled.input`
  width: 223px;
  height: 26px;
  margin-left: 8px;
  padding: 0 4px;
  border: 0;
  background: #4a5366;
  color: ${W};
  font-size: 14px;
  font-style: italic;

  &::placeholder {
    color: #b4bac4;
    opacity: 1;
  }
`;

const LoginButton = styled(PlainButton)`
  gap: 7px;
  width: 60px;
  color: ${W};
  margin: 0 70px 0 5px;
`;

const Divider = styled.span`
  width: 1px;
  height: 22px;
  background: #4a5260;
  margin: 0 6px;
`;

const WindowButtons = styled.div`
  display: flex;
  margin-left: ${({ $gap }) => ($gap ? $gap + 'px' : 'auto')};
  padding-right: 2px;
`;

const MenuBar = styled.nav`
  display: flex;
  align-items: center;
  gap: 28px;
  padding-left: 10px;
`;

const MenuItem = styled(PlainButton)`
  color: #b5b9be;
  white-space: nowrap;
`;

const FileTabs = styled.div`
  display: flex;
  align-items: flex-end;
  flex: none;
  height: 31px;
  padding-left: 20px;
`;

const FileTab = styled(PlainButton)`
  position: relative;
  justify-content: flex-start;
  gap: 2px;
  width: ${({ $w }) => $w}px;
  height: 27px;
  padding-left: ${({ $pad }) => $pad}px;
  margin-right: -9px;
  z-index: ${({ $active }) => ($active ? 1 : 0)};
  background: ${({ $active }) => ($active ? '#3b4453' : '#2d3544')};
  color: ${({ $active }) => ($active ? W : G)};
  clip-path: polygon(0 100%, 5px 25px, 9px 18px, 13px 7px, 17px 2px, 21px 0, calc(100% - 21px) 0, calc(100% - 17px) 2px, calc(100% - 13px) 7px, calc(100% - 9px) 18px, calc(100% - 5px) 25px, 100% 100%);

  svg:last-child {
    margin-left: 5px;
  }
`;

const AddTab = styled(PlainButton)`
  width: 26px;
  height: ${({ $h }) => $h || 18}px;
  margin: ${({ $m }) => $m || '0 0 4px 9px'};
  border-radius: 3px 10px 3px 10px;
  background: #2d3544;
`;

const Toolbars = styled.div`
  display: flex;
  flex-direction: column;
  flex: none;
  gap: 3px;
  padding: 4px 1px 4px 3px;
  border-top: 1px solid #3f4856;
  background: #38414f;
`;

const ToolRow = styled.div`
  display: flex;
  gap: 2px;
  height: 30px;
  overflow: hidden;
`;

const ToolGroup = styled.div`
  display: flex;
  align-items: center;
  flex: ${({ $grow }) => ($grow ? '1 0 0' : 'none')};
  min-width: 0;
  border: 1px solid #222933;
  background: #3b4453;
`;

const dotPattern = css`
  background: repeating-linear-gradient(to bottom, #3b4453 0 2px, transparent 2px 3px),
    repeating-linear-gradient(to right, #b8bcc4 0 1px, transparent 1px 3px);
`;

const Grip = styled.span`
  flex: none;
  width: 5px;
  height: 18px;
  margin: 0 2px;
  ${dotPattern}
`;

const Separator = styled.span`
  flex: none;
  width: 2px;
  height: 24px;
  margin: 0 2px;
  border-left: 1px solid #0b0f14;
  border-right: 1px solid ${W};
`;

const SelectBox = styled.label`
  position: relative;
  display: block;
  flex: ${({ $w }) => ($w ? 'none' : '1 0 0')};
  width: ${({ $w }) => ($w ? $w + 'px' : 'auto')};
  height: 28px;
  color: ${({ $disabled }) => ($disabled ? '#77797c' : '#000')};

  select {
    display: block;
    width: 100%;
    height: 100%;
    padding: 0 24px 0 ${({ $pad }) => $pad || 6}px;
    border: 1px solid #9a9fa6;
    border-radius: 0;
    background: ${({ $disabled }) => ($disabled ? '#c6c6c6' : '#f0f0f0')};
    appearance: none;
    opacity: 1;
    text-overflow: clip;
  }
`;

const SelectChevron = styled.svg`
  position: absolute;
  right: 5px;
  top: 11px;
  pointer-events: none;
`;

const SelectAdornment = styled.span`
  position: absolute;
  left: 4px;
  top: 0;
  bottom: 0;
  display: flex;
  align-items: center;
  gap: 4px;
  pointer-events: none;
`;

const Swatch = styled.span`
  width: ${({ $s }) => $s}px;
  height: ${({ $s }) => $s}px;
  border: 1px solid #000;
  background: ${W};
`;

const LineSample = styled.span`
  width: ${({ $w }) => $w}px;
  height: 1px;
  background: #000;
`;

const Workspace = styled.div`
  display: flex;
  flex: 1;
  min-height: 0;
  overflow: hidden;
`;

const Dock = styled.div`
  display: flex;
  align-items: flex-start;
  flex: none;
  gap: 3px;
  padding: 0 ${({ $right }) => ($right ? '5px 0 4px' : '4px 0 3px')};
  background: #38414f;
`;

const DockColumn = styled.div`
  display: flex;
  flex-direction: column;
  gap: 1px;
`;

const ToolStrip = styled.div`
  display: flex;
  flex-direction: column;
  align-items: center;
  width: ${({ $w }) => $w || 31}px;
  border: 1px solid #222933;
  background: #3b4453;
`;

const StripGrip = styled.span`
  flex: none;
  width: 17px;
  height: 6px;
  margin: 2px 0 1px;
  ${dotPattern}
`;

const StripButton = styled(PlainButton)`
  width: 28px;
  height: 28px;
`;

const StripSeparator = styled.span`
  flex: none;
  width: 25px;
  height: 2px;
  margin: 2px 0;
  background: ${W};
`;

const TextTool = styled.span`
  color: ${P};
  font-family: 'Liberation Sans', sans-serif;
  font-size: 12px;
`;

const Canvas = styled.main`
  position: relative;
  flex: 1;
  min-width: 0;
  overflow: hidden;
  background: #212830;
`;

const Drawing = styled.svg`
  width: 100%;
  height: 100%;
  fill: none;
`;

const ViewLabels = styled.div`
  position: absolute;
  top: 4px;
  left: 4px;
  display: flex;
  color: ${W};
`;

const ViewTools = styled.div`
  position: absolute;
  top: 8px;
  right: 10px;
  display: flex;
  flex-direction: column;
  align-items: center;
  gap: 12px;
`;

const Compass = styled.div`
  display: grid;
  grid-template-columns: 22px 54px 22px;
  grid-template-rows: 22px 54px 22px;
  place-items: center;
  color: #a5a9ae;
  font-size: 14px;
  line-height: 22px;
  background: radial-gradient(circle at 50% 51%, transparent 0 34px, #474e58 35px 41px, transparent 42px);

  & > :nth-child(1) {
    grid-area: 1 / 2;
  }
  & > :nth-child(2) {
    grid-area: 2 / 1;
  }
  & > :nth-child(3) {
    grid-area: 2 / 2;
  }
  & > :nth-child(4) {
    grid-area: 2 / 3;
  }
  & > :nth-child(5) {
    grid-area: 3 / 2;
  }
`;

const TopFace = styled(PlainButton)`
  width: 36px;
  height: 36px;
  border: 1px solid #85898d;
  background: #adadad;
  color: #4a5e6b;
  font-size: 22px;
`;

const WcsButton = styled(PlainButton)`
  gap: 7px;
  width: 57px;
  height: 21px;
  border: 2px solid #83868f;
  border-radius: 7px;
  background: #8c989e;
  color: #4c5359;
  font-family: 'Liberation Sans', sans-serif;
  font-size: 13px;
`;

const CommandPanel = styled.section`
  display: flex;
  flex: none;
  padding: 3px 3px 0 3px;
  border-top: 1px solid #3b4453;
  background: #222933;
`;

const CommandSide = styled.div`
  display: flex;
  flex-direction: column;
  align-items: center;
  gap: 8px;
  width: 30px;
  padding-top: 2px;
  background: #2d3544;

  span {
    background: repeating-linear-gradient(to bottom, #2d3544 0 2px, transparent 2px 3px),
      repeating-linear-gradient(to right, #c8c8c8 0 1px, transparent 1px 3px);
    width: 20px;
  }
`;

const CommandBody = styled.div`
  flex: 1;
  min-width: 0;
  font-family: 'Liberation Mono', 'Noto Sans CJK SC', monospace;
  font-size: 16px;
  color: #000;
`;

const History = styled.div`
  padding: 6px 3px 1px;
  background: #c8c8c8;

  p {
    margin: 0;
    height: 19px;
    line-height: 19px;
    white-space: pre;
  }
`;

const Prompt = styled.div`
  display: flex;
  align-items: center;
  height: 24px;
  margin-top: 1px;
  padding-left: 5px;
  background: ${W};
  line-height: 20px;
  white-space: pre;

  input {
    flex: 1;
    min-width: 0;
    height: 20px;
    border: 0;
    outline: 0;
    background: none;
  }
`;

const Keyword = styled(PlainButton)`
  display: block;
  height: 20px;
  line-height: 20px;
  margin-right: 6px;
  border-radius: 5px;
  background: #c8c8c8;

  &:last-of-type {
    margin-right: 0;
  }

  b {
    font-weight: 400;
    color: #0000f0;
  }
`;

const LayoutRow = styled.div`
  display: flex;
  align-items: flex-start;
  flex: none;
  height: 34px;
  padding: 1px 4px 0 13px;
`;

const LayoutTab = styled(PlainButton)`
  width: ${({ $w }) => $w}px;
  height: 22px;
  margin-right: 1px;
  background: ${({ $active }) => ($active ? '#3b4453' : '#2d3544')};
  color: ${({ $active }) => ($active ? '#fff' : '#b5b9be')};
  font-weight: ${({ $active }) => ($active ? 700 : 400)};
  line-height: 20px;
  clip-path: polygon(0 0, 100% 0, calc(100% - 3px) 6px, calc(100% - 6px) 17px, calc(100% - 11px) 100%, 11px 100%, 6px 17px, 3px 6px);
`;

const Readouts = styled.div`
  display: flex;
  gap: 2px;
  margin-left: auto;
  padding-top: 2px;
`;

const StatusGroup = styled.div`
  display: flex;
  align-items: center;
  justify-content: center;
  flex: none;
  width: ${({ $w }) => $w}px;
  height: 30px;
  background: #3b4453;
`;

const StatusBar = styled.footer`
  display: flex;
  flex: none;
  gap: 2px;
  margin: 4px 4px 6px 93px;
`;

const StatusButton = styled(PlainButton)`
  width: ${({ $w }) => $w || 30}px;
  height: 30px;
  border: ${({ $on }) => ($on ? '1px solid #7aa7d0' : '0')};
  background: ${({ $on }) => ($on ? '#5b8fc4' : 'none')};
  color: ${W};
  font-family: Roboto, 'Noto Sans CJK SC', sans-serif;
  font-size: 14px;
  font-weight: ${({ $bold }) => ($bold ? 500 : 400)};
  white-space: nowrap;
`;

const Dropdown = ({ label, options, width, pad, disabled, children }) => (
  <SelectBox $w={width} $pad={pad} $disabled={disabled}>
    <select aria-label={label} disabled={disabled}>
      {options.map((option) => (
        <option key={option}>{option}</option>
      ))}
    </select>
    {children && <SelectAdornment>{children}</SelectAdornment>}
    {!disabled && (
      <SelectChevron width="11" height="7" viewBox="0 0 11 7" aria-hidden="true">
        <path d="M1 1l4.5 4.500L10 1" fill="none" stroke="#3c3c3c" />
      </SelectChevron>
    )}
  </SelectBox>
);

const Tools = ({ names, width, small }) =>
  names.map((name, i) => {
    if (name === '|') return <Separator key={i} />;
    if (name === 'v')
      return (
        <ToolButton key={i} $w={15} aria-label="list">
          {small ? <SmallCaret /> : <Caret />}
        </ToolButton>
      );
    return (
      <ToolButton key={i} $w={width} aria-label={name}>
        <Icon name={name} />
      </ToolButton>
    );
  });

const Strip = ({ names, width, flyouts }) => (
  <ToolStrip $w={width}>
    <StripGrip />
    {names.map((name, i) => {
      if (name === '-') return <StripSeparator key={i} />;
      return (
        <StripButton key={i} aria-label={name}>
          {name === 'text' ? <TextTool>Text</TextTool> : <Icon name={name} flyout={flyouts} />}
        </StripButton>
      );
    })}
  </ToolStrip>
);

const CYAN = '#00ffff';
const GREEN = '#00ff00';
const RED = '#ff0000';
const MAGENTA = '#ff00ff';
const WHITE = '#f4f4f4';

const tubes = [242, 276, 372, 407];
const dimMarks = [
  [323, 181], [323, 230], [323, 347], [323, 665], [193, 532], [193, 568], [323, 881], [323, 896], [323, 909], [168, 412], [211, 283], [222, 361], [218, 203], [295, 206], [202, 236],
];
const dimMarksV = [
  [345, 262], [345, 463], [345, 580], [345, 697], [345, 826], [475, 252], [492, 252], [460, 555], [460, 672], [502, 537], [541, 604], [421, 327], [233, 414], [196, 100], [190, 395], [138, 827], [228, 797], [184, 855], [113, 346], [254, 817], [361, 812], [255, 213],
];
const greenTags = [
  [96, 200], [96, 740], [96, 764], [96, 806], [96, 947], [163, 264], [163, 308], [184, 168], [217, 190], [440, 180], [362, 307], [488, 306], [475, 496], [475, 614], [475, 730], [480, 831], [58, 436], [187, 781], [175, 842], [319, 838], [453, 862],
];

// elevation of the regenerator column, drawn at three units per pixel
const Tower = () => (
  <g transform="translate(600 160) scale(.333333)" strokeWidth="4">
    <g stroke={WHITE}>
      <path d="M106.500 64V974M176 70V335M219 340V870M228 345V815M431 215V870M106 465c0 70 109 70 109 0V340M138 455c0 45 46 45 46 0V337H212" />
      <path d="M123 72V240" strokeWidth="7" />
      <path d="M93 245V452M154 245V452M93 452H106M140 452H154M108 315V370H140V295H108V315H140" />
      <path d="M85 246H161M104 235H142M108 302H138M154 360H184M154 424H184M154 430H184" strokeWidth="5" />
      <path d="M309 55V198M341 55V198M298 55H350L325 30zM222 55H275M222 55V140M375 55H428V140" strokeWidth="4" />
      <path d="M228 157H431M228 180H431M210 284H440M180 344H431M228 407H431M228 523H431M228 640H431M222 814H431M219 868H431" strokeWidth="4" />
      <path d="M219 755H431" strokeWidth="6" />
      <path d="M210 219L310 200H345L452 217M446 220V290H468M452 217V300M200 210H240M200 220H230M197 225V290H210V340M445 310H470" />
      <path d="M415 215V200c0-16 30-16 30 0V215" />
      <path d="M75 410V448H95M75 415H95M70 412V445M430 480H443V512H430M430 598H443V630H430M430 714H443V746H430M219 770H205V803H219M230 832H198V850H230V832M210 850V866M193 157V182M193 168H220" />
      <path d="M265 85h22v24h-22zM232 85h22v24h-22zM365 85h18v24h-18zM398 85h18v24h-18z" />
      <path d="M211 131h20v20h-20zM419 131h20v20h-20zM432 828h10v8h-10zM444 256h16v8h-16z" fill={WHITE} />
      <circle cx="325" cy="854" r="7" fill={WHITE} />
      <circle cx="223" cy="168" r="10" />
      <circle cx="427" cy="168" r="10" />
      <path d="M235 75C235 60 245 65 245 85M270 60C285 60 280 80 276 85M372 85V68H380M405 85C405 68 412 68 425 68" strokeWidth="6" />
      {tubes.map((x) => (
        <path key={x} d={`M${x - 6} 110V820M${x + 6} 110V820M${x - 6} 820H${x + 6}M${x - 10} 145H${x + 10}`} />
      ))}
    </g>
    <g stroke={RED}>
      {tubes.map((x) => (
        <path key={x} d={`M${x} 80V822`} strokeDasharray="16 3" stroke="#ff4b4b" />
      ))}
      <path d="M325 78V850" strokeWidth="4" strokeDasharray="40 5" />
      <path d="M125 320V460c0 50 75 50 75 0V334H235M245 91H275M370 91H402M205 216H225M200 840H230M415 508H445M425 613H445M425 730H445M205 787H225M78 430H98M450 305H470M430 862H445M222 60V75M428 60V78" />
    </g>
    <path d="M108 375V457H138V375M218 290L440 312" stroke={MAGENTA} strokeWidth="5" />
    <g stroke={CYAN}>
      <path d="M242 12V42H222M275 42V13H374V60M407 12V55M196 67H218M196 67V133H218M232 42H275" />
      <path d="M435 145H506V868M431 343H545V868H140V787H205M219 184H430M200 232H448M219 349H431M219 667H431M219 667V710M431 667V710" />
      <path d="M350 220V300H325M345 407V755M345 815V868M125 460V535H325M95 450V571H325V530M463 496V753H430M440 496H478M440 614H478M440 730H478" />
      <path d="M430 220H497V312H450M475 220V312M423 284V370H440V285M88 205L106 206L122 222M172 208L202 222M157 267L198 264M160 310L210 330M90 320L115 350M93 258H160" />
      <path d="M88 745L242 769M88 769L232 815M88 811L219 825M106 950L219 875M88 952H106M209 870V913H440V870M214 896H435M219 883H431M187 850V868M467 831V868M437 831H480M230 787V812" />
      <path d="M440 306H495M58 436H75M175 842H195M184 168H200M190 365V427M155 365H193M155 412H180M233 381V447M210 415H257M218 190V200M260 190L272 215M325 215H430M190 250V262H205" />
      <circle cx="380" cy="305" r="15" />
      {dimMarks.map(([x, y]) => (
        <path key={`${x}-${y}`} d={`M${x - 9} ${y}H${x + 9}`} strokeWidth="10" />
      ))}
      {dimMarksV.map(([x, y]) => (
        <path key={`${x}-${y}`} d={`M${x} ${y - 8}V${y + 8}`} strokeWidth="9" />
      ))}
      <path d="M292 18L310 40M305 20L292 38M260 122H275M448 294H470M195 873H228M280 875l14-14M303 852h8v12" strokeWidth="7" />
    </g>
    <g stroke={GREEN} strokeWidth="8">
      <path d="M44 319H90M430 496H442" />
      {greenTags.map(([x, y]) => (
        <path key={`${x}-${y}`} d={`M${x - 4} ${y}H${x + 5}`} />
      ))}
    </g>
  </g>
);

const polar = (r, deg) => {
  const a = (deg * Math.PI) / 180;
  return `${(r * Math.cos(a)).toFixed(1)} ${(r * Math.sin(a)).toFixed(1)}`;
};
const ring16 = Array.from({ length: 16 }, (_, i) => 11.25 + i * 22.5);
const ring8 = Array.from({ length: 8 }, (_, i) => 22.5 + i * 45);

const RoundView = ({ x, y, nozzle }) => (
  <g transform={`translate(${x} ${y}) scale(.333333)`} strokeWidth="4">
    <circle r="98" stroke={RED} strokeDasharray="14 5" />
    <circle r="52" stroke={RED} strokeDasharray="14 9" strokeWidth="3" />
    <g stroke={WHITE}>
      <circle r="127" />
      <circle r="112" strokeDasharray="24 7" />
      <circle r="104" strokeDasharray="9 5" />
      <path d="M-127-6H-110M-127 6H-110M-136-15H-126V15H-136zM-6 128V145M7 128V145M-10-132H10M-98 82L-112 97L-96 113M-88 92L-94 107" />
    </g>
    {ring16.map((deg) => (
      <g key={deg} transform={`rotate(${deg})`}>
        <path d="M90-9L114-11M90 10L114 12" stroke={WHITE} strokeWidth="5" />
        <path d="M107-14V14" stroke={WHITE} strokeWidth="9" strokeDasharray="9 10" />
        <circle cx="84" r="10" stroke={RED} strokeWidth="4" fill="#c21a1a" fillOpacity=".5" />
        <path d="M78-3l12 6M80 5l8-9" stroke="#ffb0b0" strokeWidth="3" />
      </g>
    ))}
    {ring8.map((deg) => (
      <g key={deg}>
        <path d={`M${polar(60, deg)}L${polar(104, deg + 5)}M${polar(60, deg)}L${polar(104, deg - 4)}`} stroke="#ffd0d0" strokeWidth="6" />
        <g transform={`rotate(${deg}) translate(52 0)`}>
          <circle r="10" stroke={RED} strokeWidth="4" fill="#c21a1a" fillOpacity=".5" />
          <path d="M-6-3l12 6" stroke="#ffb0b0" strokeWidth="2" />
        </g>
      </g>
    ))}
    <path d="M0-142V145M-138 0H140" stroke={RED} />
    <circle r="17" stroke={MAGENTA} strokeWidth="5" />
    <circle r="12" stroke={WHITE} strokeWidth="2" />
    <path d="M110-35c12 20 12 50 0 70M98-20v40" stroke={MAGENTA} strokeDasharray="8 5" />
    <path d="M-60-58L40 38M128-24H140V22H128M134-24V22" stroke={CYAN} />
    <path d="M-52-56L-20-24" stroke={GREEN} strokeWidth="10" />
    <path d="M-170 0H-143M150 0H160M-156 114H-108M-2-166V-150" stroke={CYAN} strokeWidth="9" strokeDasharray="8 3" />
    <path d="M-190 0H-172M160-1H174M-4-177H5M108-45H118M108 44H118" stroke={GREEN} strokeWidth="9" />
    {nozzle === 'top' ? (
      <g>
        <path d="M78-97L102-119M96-78L122-102M160-88L170-80L184-98L176-108" stroke={WHITE} />
        <circle cx="135" cy="-134" r="36" stroke={WHITE} />
        <path d="M105-164L180-90M165-164L90-86" stroke={RED} strokeDasharray="20 4" />
        <path d="M178-85H188" stroke={GREEN} strokeWidth="9" />
      </g>
    ) : (
      <g>
        <path d="M78 100L104 122M100 78L122 98M150 92L164 82L184 104L172 120" stroke={WHITE} />
        <circle cx="132" cy="132" r="36" stroke={WHITE} />
        <path d="M82 86L160 164M160 104L100 164" stroke={RED} strokeDasharray="20 4" />
        <path d="M178 84H188" stroke={GREEN} strokeWidth="9" />
        <path d="M-70-104L-24-120M-28-64c16-8 38-8 54 0" stroke={CYAN} strokeWidth="5" strokeDasharray="14 3" />
        <path d="M-50-113H-28M-10-67H8" stroke={GREEN} strokeWidth="7" />
      </g>
    )}
  </g>
);

const rows = (from, to, step) => {
  const out = [];
  for (let y = from; y <= to; y += step) out.push(y);
  return out;
};

const topRows = [18, 28, 39, 48, 58, 69, 79, 91, 100, 109, 121, 130, 141, 151, 160, 172, 181, 193, 202, 213, 223];
const noteLines = [[237, 213], [250, 258], [263, 183], [275, 132], [287, 162], [298, 107], [313, 120], [326, 231], [339, 75]];
const greenBlocks = [
  [53, 20, 15, 190], [93, 28, 10, 48], [90, 100, 20, 22], [93, 120, 9, 90], [144, 20, 10, 200], [128, 111, 50, 10], [138, 175, 20, 38],
  [183, 25, 80, 16], [225, 10, 30, 8], [100, 12, 36, 6], [184, 60, 22, 50], [184, 97, 40, 12], [255, 60, 58, 48], [184, 125, 8, 40], [205, 123, 18, 72], [236, 123, 16, 80], [262, 123, 18, 50], [298, 123, 12, 50], [192, 203, 12, 10], [262, 203, 12, 10], [155, 214, 18, 8],
  [58, 370, 8, 100], [84, 380, 72, 48], [104, 370, 22, 12], [84, 453, 68, 18], [120, 430, 4, 22], [172, 370, 22, 102], [208, 370, 12, 100], [238, 370, 12, 100], [275, 370, 32, 8], [286, 390, 6, 60], [282, 452, 16, 18],
];

const Tables = () => (
  <g transform="translate(860 160) scale(.333333)" strokeWidth="3">
    <g fill={GREEN} fillOpacity=".92">
      {greenBlocks.map(([x, y, w, h]) => (
        <rect key={`${x}-${y}`} x={x} y={y} width={w} height={h} />
      ))}
    </g>
    <g stroke={GREEN} strokeWidth="8">
      {noteLines.map(([y, x]) => (
        <path key={y} d={`M53 ${y}H${x}`} />
      ))}
    </g>
    <g stroke={CYAN} shapeRendering="crispEdges">
      <path d="M52 12V470M118 20V213M184 20V213M232 121V195M256 60V195M289 121V172M73 367V470M168 367V470M199 367V470M226 367V470M265 367V470" />
      {topRows.map((y) => (
        <path key={y} d={`M52 ${y}H316`} />
      ))}
      <path d="M52 355H316" />
      {rows(367, 470, 10.2).map((y) => (
        <path key={y} d={`M52 ${y}H316`} />
      ))}
    </g>
    <g>
      <path d="M110 525H122M88 852H99M153 853H174M224 857H236" stroke={GREEN} strokeWidth="10" />
      <path d="M91 586V555H143V733M74 579H92M102 585L116 565L132 585M100 622H142M138 622V668M120 600H130M115 550H120" stroke={CYAN} strokeWidth="5" />
      <path d="M108 572H134" stroke={CYAN} strokeWidth="10" strokeDasharray="7 4" />
      <path d="M90 586H146M100 586V733H133V586" stroke={WHITE} strokeWidth="5" />
      <path d="M116 540V742" stroke={RED} strokeWidth="4" />
      <circle cx="97" cy="883" r="13" stroke={CYAN} strokeWidth="11" strokeDasharray="9 2" />
      <path d="M70 868l14 12M80 888H118M118 876H92" stroke={CYAN} strokeWidth="7" />
      <path d="M88 882H106" stroke={MAGENTA} strokeWidth="5" />
      <path d="M102 886H116" stroke={WHITE} />
      <circle cx="166" cy="888" r="9" stroke={CYAN} strokeWidth="11" strokeDasharray="12 2" />
      <path d="M150 898V882M178 875V895" stroke={CYAN} strokeWidth="5" />
      <path d="M165 886V902" stroke={RED} strokeWidth="4" />
      <path d="M227 880H236V892H227zM226 878V895" stroke={WHITE} strokeWidth="4" />
      <path d="M240 886H252M224 902H238" stroke={CYAN} strokeWidth="10" />
    </g>
  </g>
);

const partRows = rows(545, 762, 10.4);

const PartsTable = () => (
  <g transform="translate(1310 410) scale(.333333)" strokeWidth="3" shapeRendering="crispEdges">
    <g fill={GREEN}>
      <rect x="46" y="540" width="14" height="222" fillOpacity=".75" />
      <rect x="108" y="536" width="42" height="145" />
      <rect x="150" y="536" width="24" height="42" />
      <rect x="112" y="688" width="22" height="74" />
      <rect x="134" y="708" width="22" height="36" />
      <rect x="188" y="536" width="10" height="226" />
      <rect x="203" y="536" width="20" height="226" />
      <rect x="223" y="700" width="14" height="45" />
    </g>
    <path d="M106 536V762M64 536V762M200 536V762" stroke={CYAN} />
    {partRows.map((y) => (
      <path key={y} d={`M64 ${y}H240`} stroke={CYAN} />
    ))}
    <path d="M42 566H240M42 607H240M42 680H240" stroke={CYAN} />
    {[546, 576, 597, 618, 658].map((y) => (
      <path key={y} d={`M46 ${y - 6}h14v12h-14z`} stroke="#0b1f12" />
    ))}
    <path d="M40 762V534H240" stroke={WHITE} />
  </g>
);

const ModelDrawing = () => (
  <Drawing role="img" aria-label="A再生塔1-1">
    <g transform="translate(-72 -164)">
      <g shapeRendering="crispEdges">
        <path d="M565.5 164V664M974.5 164V664" stroke={CYAN} />
        <path d="M575.5 164V664M965.5 164V664" stroke={WHITE} />
      </g>
      <Tower />
      <Tables />
      <RoundView x={670} y={615} nozzle="bottom" />
      <RoundView x={804} y={615} nozzle="top" />
      <path d="M877.5 664V647.500H965M877 651.5H965M877 655.5H965M877 659.5H965M882.5 647V664M899.5 647V664M926.5 647V664M931.5 647V664M946.5 647V664M955.5 647V664" stroke={CYAN} />
      <path d="M880.5 648V664" stroke={GREEN} strokeWidth="2" />
      <PartsTable />
      <path d="M1102.5 457V553M1054 504.500H1150" stroke={WHITE} />
      <path d="M1112 477H1129V494H1112z" fill="#000" />
      <path d="M1114 480H1127V491H1114z" stroke="#fff" strokeWidth="2" strokeDasharray="3 1" />
      <circle cx="1114" cy="485" r="3.5" fill="#00d000" />
      <path d="M86.5 589V649.500H148M81.5 643.500H92.500V654.500H81.500z" stroke={WHITE} />
      <path d="M88 569L95.5 576.500L103 569M95.5 576V584M153 633L168 648M168 633L153 648" stroke={WHITE} />
    </g>
  </Drawing>
);

const menus = ['文件(F)', '编辑(E)', '视图(V)', '插入(I)', '格式(O)', '工具(T)', '绘图(D)', '标注(N)', '修改(M)', '参数(P)', '天河PCCAD', '窗口(W)', '帮助(H)', 'Express'];

const standardTools = ['new', 'open', 'save', '|', 'print', 'preview', 'publish', 'cube', '|', 'cut', 'copy', 'paste', 'match', 'blockedit', '|', 'undo', 'v', 'redo', 'v', '|', 'hand', 'zoomrt', 'zoomwin', 'zoomprev', '|', 'props', 'designcenter', 'palettes', 'sheetset', 'markup', 'calc', '|', 'help'];

const modifyTools = ['erase', 'copyobj', 'mirror', 'offset', 'array', 'move', 'rotate', 'scale', 'stretch', 'trim', 'extend', 'breakpt', 'break', 'join', 'chamfer', 'fillet', 'blend', 'explodeobj'];
const drawTools = ['line', 'xline', 'pline', 'polygon', 'rect', 'arc', 'circle', 'cloud', 'spline', 'ellipse', 'ellipsearc', 'insert', 'makeblock', 'point', 'hatch', 'gradient', 'region', 'table'];
const pccadTools = ['sheet', 'leaderNumber', 'boltCircle', 'shapes', 'dimZoom', 'surface', 'drill', 'text', 'beam', 'note', 'parts', 'explode', 'wrenchPart', 'bom', 'books'];
const pccadQuick = ['sheet', 'sheettable', 'leaderNumber', '-', 'drill', '-', 'dimZoom', 'surface', 'tolerance', '-', 'boltCircle', 'corner', 'weld', '-', 'explode'];
const pccadParts = ['screw', 'nut', 'bearing', 'cone', 'seal', 'plate'];

const history = [
  '[当前序号：8]输序号或选择序号引出点 ，或[选择出库标准件(C)]：',
  ' 请指定序号位置（按鼠标右键改变引出方向, 指定与某序号对齐按\'D\'键）：*取消*',
  'REGEN 正在重生成模型。',
  '命令:',
];

// one entry per status group: [width, items], an item being [icon, width, on]
const statusGroups = [
  [30, [['infer', 30]]],
  [29, [['snap', 29]]],
  [129, [['ortho', 28], ['polar', 32], ['v', 16], ['iso', 34], ['v', 19]]],
  [78, [['track', 28, true], ['gap', 2], ['osnap', 28, true], ['v', 20]]],
  [60, [['lweight', 29], ['gap', 3], ['transp', 28, true]]],
  [82, [['cycle', 30], ['cube3d', 32], ['v', 20]]],
  [78, [['ducs', 29, true], ['filter', 31], ['v', 18]]],
  [51, [['gizmo', 28, true], ['v', 23]]],
];

const StatusItems = ({ items, toggled, onToggle }) =>
  items.map(([name, width, on], i) => {
    if (name === 'gap') return <StatusButton as="span" key={i} $w={width} />;
    if (name === 'v')
      return (
        <StatusButton key={i} $w={width} aria-label="options">
          <Caret />
        </StatusButton>
      );
    const active = toggled ? toggled[name] ?? on : on;
    return (
      <StatusButton key={i} $w={width} $on={active} aria-label={name} onClick={() => onToggle && onToggle(name, !active)}>
        <Icon name={name} />
      </StatusButton>
    );
  });

const App = () => {
  const [command, setCommand] = useState('');
  const [layout, setLayout] = useState('模型');
  const [toggled, setToggled] = useState({});

  const handleToggle = (name, value) => setToggled({ ...toggled, [name]: value });

  return (
    <Page>
      <GlobalStyle />
      <TopEdge />
      <Header>
        <LogoButton aria-label="AutoCAD">
          <svg width="32" height="35" viewBox="0 0 32 35" aria-hidden="true">
            <path d="M11 1h10l11 33h-7l-2-7H10l-3 7H0z" fill="#c42b30" />
            <path d="M11 1h5L5 34H0z" fill="#a71f27" />
            <path d="M16 8l5 13H11z" fill="#212830" />
            <path d="M10 22l8-4 7 9H9z" fill="#d8474b" />
            <path d="M0 34l2-7h7l-2 7zM23 27h7l2 7h-7z" fill="#e58587" />
            <path d="M21 1l11 33h-3L16 1z" fill="#d4393e" />
          </svg>
        </LogoButton>
        <TitleBar>
          <Tools names={['new', 'open', 'save', 'saveas', 'mobile', 'upload', 'print', 'undo', 'v', 'redoDim', 'v', 'customize']} width={30} small />
          <Title>A再生塔1-1.dwg - 只读</Title>
          <svg width="6" height="10" viewBox="0 0 6 10" aria-hidden="true">
            <path d="M0 0l6 5-6 5z" fill={G} />
          </svg>
          <SearchField aria-label="搜索" placeholder="键入关键字或短语" />
          <ToolButton aria-label="搜索">
            <Icon name="search" />
          </ToolButton>
          <LoginButton>
            <Icon name="user" />
            登录
          </LoginButton>
          <Tools names={['v']} small />
          <ToolButton $w={34} aria-label="cart">
            <Icon name="cart" size={18} />
          </ToolButton>
          <ToolButton $w={28} aria-label="a360">
            <Icon name="a360" />
          </ToolButton>
          <Tools names={['v']} small />
          <Divider />
          <Tools names={['help', 'v']} small />
          <WindowButtons $gap={75}>
            <Tools names={['min', 'max', 'close']} width={31} />
          </WindowButtons>
        </TitleBar>
        <MenuBar>
          {menus.map((label) => (
            <MenuItem key={label}>{label}</MenuItem>
          ))}
          <WindowButtons>
            <Tools names={['min', 'restore', 'close']} width={22} />
          </WindowButtons>
        </MenuBar>
      </Header>

      <FileTabs>
        <FileTab $w={173} $pad={22}>
          开始
        </FileTab>
        <FileTab $w={162} $pad={10} $active>
          <Icon name="lock" size={15} />
          A再生塔1-1*
          <Icon name="closeTab" />
        </FileTab>
        <AddTab aria-label="新图形">
          <Icon name="plus" size={17} />
        </AddTab>
      </FileTabs>

      <Toolbars>
        <ToolRow>
          <ToolGroup>
            <Grip />
            <Tools names={standardTools} />
          </ToolGroup>
          <ToolGroup $grow>
            <Grip />
            <Tools names={['textstyle']} />
            <Dropdown label="文字样式" options={['PC_TEXTSTYLE']} width={150} pad={23} />
            <Tools names={['|', 'dimstyle']} />
            <Dropdown label="标注样式" options={['TH_GBDIM']} width={150} pad={23} />
            <Tools names={['|', 'tablestyle']} />
            <Dropdown label="表格样式" options={['Standard']} width={150} />
            <Tools names={['|', 'mleader']} />
            <Dropdown label="多重引线样式" options={['Standard']} width={150} pad={23} />
          </ToolGroup>
        </ToolRow>
        <ToolRow>
          <ToolGroup>
            <Grip />
            <Dropdown label="工作空间" options={['AutoCAD 经典']} width={218} pad={8} />
            <Tools names={['gear', 'home']} />
          </ToolGroup>
          <ToolGroup>
            <Grip />
            <Tools names={['layers']} />
            <Dropdown label="图层" options={['0']} width={374} pad={121}>
              <Icon name="bulb" />
              <Icon name="sun" />
              <Icon name="vpfreeze" />
              <Icon name="unlock" />
              <Swatch $s={16} />
            </Dropdown>
            <Tools names={['layermake', 'layerprev', 'layerstate']} />
          </ToolGroup>
          <ToolGroup $grow>
            <Grip />
            <Dropdown label="颜色" options={['ByLayer']} width={188} pad={24}>
              <Swatch $s={18} />
            </Dropdown>
            <Separator />
            <Dropdown label="线型" options={['ByLayer']} width={199} pad={86}>
              <LineSample $w={76} />
            </Dropdown>
            <Separator />
            <Dropdown label="线宽" options={['ByLayer']} width={157} pad={55}>
              <LineSample $w={44} />
            </Dropdown>
            <Separator />
            <Dropdown label="打印样式" options={['ByColor']} pad={12} disabled />
          </ToolGroup>
        </ToolRow>
      </Toolbars>

      <Workspace>
        <Dock>
          <Strip names={modifyTools} width={30} />
          <Strip names={drawTools} />
        </Dock>
        <Canvas>
          <ModelDrawing />
          <ViewLabels>
            <PlainButton>[−]</PlainButton>
            <PlainButton>[俯视]</PlainButton>
            <PlainButton>[二维线框]</PlainButton>
          </ViewLabels>
          <ViewTools>
            <Compass>
              <span>北</span>
              <span>西</span>
              <TopFace>上</TopFace>
              <span>东</span>
              <span>南</span>
            </Compass>
            <WcsButton>
              WCS
              <Caret color="#b3bbc0" />
            </WcsButton>
          </ViewTools>
        </Canvas>
        <Dock $right>
          <Strip names={pccadTools} flyouts />
          <DockColumn>
            <Strip names={pccadQuick} />
            <Strip names={pccadParts} />
          </DockColumn>
        </Dock>
      </Workspace>

      <CommandPanel>
        <CommandSide>
          <StripGrip />
          <PlainButton aria-label="关闭">
            <Icon name="close" size={18} />
          </PlainButton>
          <PlainButton aria-label="自定义">
            <Icon name="wrench" />
          </PlainButton>
        </CommandSide>
        <CommandBody>
          <History>
            {history.map((line) => (
              <p key={line}>{line}</p>
            ))}
          </History>
          <Prompt>
            <svg width="21" height="16" viewBox="0 0 21 16" aria-hidden="true">
              <path d="M1 1h19v14H1z" fill="#dcdcdc" stroke="#777" />
              <path d="M1 1h19v3H1z" fill="#777" />
              <path d="M3 6l3 3-3 3M8 12h5" fill="none" stroke="#555" />
            </svg>
            <PlainButton aria-label="最近使用的命令">
              <svg width="13" height="6" viewBox="0 0 13 6" aria-hidden="true">
                <path d="M2 0h9L7 6z" fill="#666" />
              </svg>
            </PlainButton>
            {'指定对角点或 ['}
            <Keyword>
              栏选(<b>F</b>)
            </Keyword>
            <Keyword>
              圈围(<b>WP</b>)
            </Keyword>
            <Keyword>
              圈交(<b>CP</b>)
            </Keyword>
            {']:'}
            <input aria-label="命令" value={command} onChange={(e) => setCommand(e.target.value)} />
          </Prompt>
        </CommandBody>
      </CommandPanel>

      <LayoutRow>
        {['模型', '布局1', '布局2'].map((label, i) => (
          <LayoutTab key={label} $w={i ? 68 : 64} $active={layout === label} onClick={() => setLayout(label)}>
            {label}
          </LayoutTab>
        ))}
        <AddTab $h={20} $m="0 0 0 4px" aria-label="新布局">
          <Icon name="plus" size={16} />
        </AddTab>
        <Readouts>
          <StatusGroup $w={226}>
            <StatusButton $w={226}>27069.3740, 11007.5994, 0.0000</StatusButton>
          </StatusGroup>
          <StatusGroup $w={35}>
            <StatusButton $w={35} $bold>
              模型
            </StatusButton>
          </StatusGroup>
          <StatusGroup $w={81}>
            <StatusItems items={[['grid', 29], ['dots', 31], ['v', 21]]} />
          </StatusGroup>
        </Readouts>
      </LayoutRow>

      <StatusBar>
        {statusGroups.map(([width, items]) => (
          <StatusGroup key={items[0][0]} $w={width}>
            <StatusItems items={items} toggled={toggled} onToggle={handleToggle} />
          </StatusGroup>
        ))}
        <StatusGroup $w={299}>
          <StatusItems items={[['annovis', 28, true], ['annoauto', 32], ['anno', 28]]} toggled={toggled} onToggle={handleToggle} />
          <StatusButton $w={191}>1:1_1_2_XREF_XREF_1 / 100%</StatusButton>
          <StatusItems items={[['v', 20]]} />
        </StatusGroup>
        <StatusGroup $w={50}>
          <StatusItems items={[['gear', 32], ['v', 18]]} />
        </StatusGroup>
        <StatusGroup $w={30}>
          <StatusItems items={[['crossplus', 30]]} />
        </StatusGroup>
        <StatusGroup $w={122}>
          <StatusItems items={[['ruler', 30]]} />
          <StatusButton $w={44} $bold>
            小数
          </StatusButton>
          <StatusButton $w={28} as="span" />
          <StatusItems items={[['v', 20]]} />
        </StatusGroup>
        <StatusGroup $w={30}>
          <StatusItems items={[['quickprops', 30]]} />
        </StatusGroup>
        <StatusGroup $w={50}>
          <StatusItems items={[['lockui', 30], ['v', 20]]} />
        </StatusGroup>
        <StatusGroup $w={30}>
          <StatusItems items={[['isolate', 30]]} />
        </StatusGroup>
        <StatusGroup $w={31}>
          <StatusItems items={[['hardware', 31]]} />
        </StatusGroup>
        <StatusGroup $w={92}>
          <StatusItems items={[['pccad', 28], ['sync', 30], ['chartwarn', 34]]} />
        </StatusGroup>
        <StatusGroup $w={61}>
          <StatusItems items={[['clean', 30], ['menu', 31]]} />
        </StatusGroup>
      </StatusBar>
    </Page>
  );
};

export default App;
